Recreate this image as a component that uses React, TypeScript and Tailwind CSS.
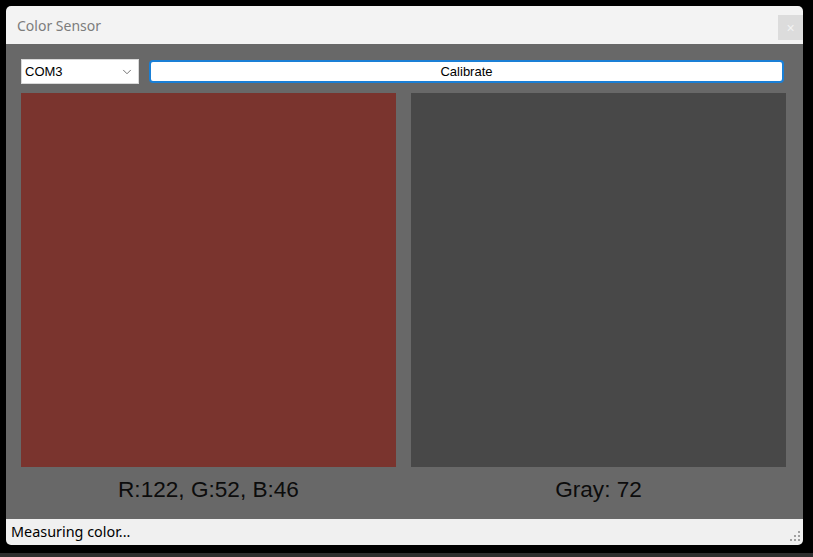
import { ChevronDown } from "lucide-react"

const reading = { r: 122, g: 52, b: 46 }
const gray = 72

function SizeGrip() {
  // little dot triangle in the bottom-right corner of the status bar
  const dots = [
    [8, 0],
    [4, 4],
    [8, 4],
    [0, 8],
    [4, 8],
    [8, 8],
  ]
  return (
    <svg width="11" height="11" viewBox="0 0 11 11" className="mb-[3px] mr-[2px] self-end">
      {dots.map(([x, y]) => (
        <rect key={`${x}-${y}`} x={x} y={y} width="2" height="2" fill="#a0a0a0" />
      ))}
    </svg>
  )
}

export default function App() {
  return (
    <div className="flex h-[557px] w-[813px] flex-col overflow-hidden bg-black">
      <div className="ml-[6px] mt-[6px] flex h-[539px] w-[797px] flex-col overflow-hidden rounded-[5px]">
        {/* Title bar */}
        <div className="flex h-[38px] shrink-0 items-start justify-between bg-[#f3f3f3]">
          <span className="mt-[9px] pl-[11px] font-['Noto_Sans',sans-serif] text-[14px] text-[#7c7c7c]">
            Color Sensor
          </span>
          <div className="mt-[9px] flex h-[25px] w-[25px] items-center justify-center bg-[#dcdcdc] font-['Liberation_Sans',sans-serif] text-[14px] leading-none text-[#f3f3f3]">
            ×
          </div>
        </div>

        {/* Body */}
        <div className="flex flex-1 flex-col bg-[#686868] pl-[15px] pr-[17px] pt-[15px]">
          <div className="flex h-[25px] items-center gap-[10px]">
            <div className="flex h-[25px] w-[118px] items-center justify-between border border-[#d9d9d9] bg-white pl-[3px] pr-[4px] font-['Liberation_Sans',sans-serif] text-[13px] text-black">
              <span>COM3</span>
              <ChevronDown className="h-[14px] w-[14px] text-[#606060]" strokeWidth={1.5} />
            </div>
            <button className="mr-[2px] flex h-[23px] flex-1 items-center justify-center rounded-[4px] border-2 border-[#1a7fd6] bg-white pt-[1px] font-['Liberation_Sans',sans-serif] text-[13px] text-black">
              Calibrate
            </button>
          </div>

          <div className="mt-[9px] flex gap-[15px]">
            <div className="flex w-[375px] flex-col items-center">
              <div
                className="h-[374px] w-[375px]"
                style={{ backgroundColor: `rgb(${reading.r}, ${reading.g}, ${reading.b})` }}
              />
              <div className="mt-[9px] font-['Liberation_Sans',sans-serif] text-[22.6px] leading-[28px] text-[#0c0c0c]">
                R:{reading.r}, G:{reading.g}, B:{reading.b}
              </div>
            </div>
            <div className="flex w-[375px] flex-col items-center">
              <div
                className="h-[374px] w-[375px]"
                style={{ backgroundColor: `rgb(${gray}, ${gray}, ${gray})` }}
              />
              <div className="mt-[9px] font-['Liberation_Sans',sans-serif] text-[22.6px] leading-[28px] text-[#0c0c0c]">
                Gray: {gray}
              </div>
            </div>
          </div>
        </div>

        {/* Status bar */}
        <div className="flex h-[26px] shrink-0 items-center justify-between bg-[#f0f0f0] pl-[5px]">
          <span className="font-['Noto_Sans',sans-serif] text-[14.4px] text-black">Measuring color...</span>
          <SizeGrip />
        </div>
      </div>
      <div className="mt-[8px] h-[4px] w-full bg-[#2e2e2e]" />
    </div>
  )
}
